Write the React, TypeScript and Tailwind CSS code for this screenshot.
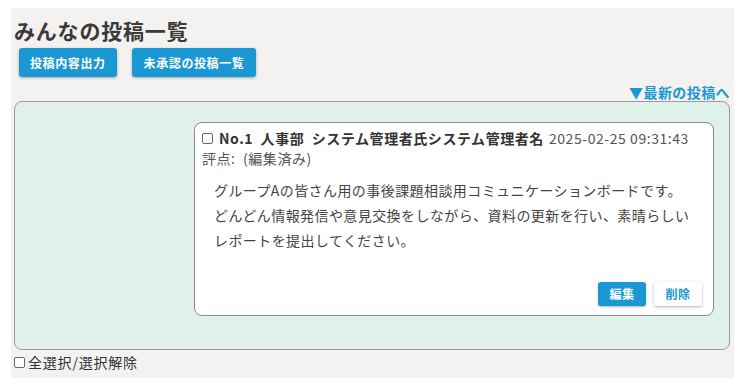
import React from "react";

function Box() {
  return <span className="inline-block w-[11px] h-[11px] border border-[#666] rounded-[2px] bg-white mr-[6px] align-[-1px]" />;
}

export default function App() {
  return (
    <div className="w-[740px] h-[386px] bg-white pt-[8px] pl-[11px] tracking-[0.05em]" style={{ fontFamily: '"Noto Sans CJK JP", "Noto Sans", sans-serif' }}>
      <div className="w-[723px] h-[370px] bg-[#f3f2f1] pl-[3px] pr-[4px] flex flex-col">
        <h1 className="text-[21px] font-bold text-[#3a3a3a] leading-[26px] mt-[9px]">みんなの投稿一覧</h1>
        <div className="flex gap-[15px] mt-[5px] ml-[5px]">
          <button className="h-[29px] px-[11px] bg-[#1b98d4] text-white text-[12px] font-bold rounded-[3px] shadow-[0_1px_3px_rgba(0,0,0,0.3)] tracking-[0.05em]">投稿内容出力</button>
          <button className="h-[29px] px-[12px] bg-[#1b98d4] text-white text-[12px] font-bold rounded-[3px] shadow-[0_1px_3px_rgba(0,0,0,0.3)] tracking-[0.05em]">未承認の投稿一覧</button>
        </div>
        <div className="flex justify-end mt-[6px] h-[18px] items-center">
          <span className="text-[14px] font-bold text-[#1b98d4] leading-[18px] tracking-[0.03em]">▼最新の投稿へ</span>
        </div>
        <div className="w-[716px] h-[249px] bg-[#e0f1ec] border border-[#9a9a9a] rounded-[8px] pt-[20px] pl-[179px] pr-[15px]">
          <div className="h-[194px] bg-white border border-[#8a8a8a] rounded-[8px] pt-[5px] px-[7px] flex flex-col text-[14px] tracking-[0.04em]">
            <div className="flex items-center leading-[20px] text-[#333] whitespace-nowrap">
              <Box />
              <span className="font-bold">No.1&nbsp;&nbsp;人事部&nbsp;&nbsp;システム管理者氏システム管理者名</span>
              <span className="ml-[5px] text-[#555]">2025-02-25 09:31:43</span>
            </div>
            <div className="leading-[20px] text-[#555] text-[14px]">評点:&nbsp;&nbsp;(編集済み)</div>
            <div className="mt-[10px] pl-[12px] leading-[25px] text-[#444] text-[14px] whitespace-nowrap tracking-[0.03em]">
              <div>グループAの皆さん用の事後課題相談用コミュニケーションボードです。</div>
              <div>どんどん情報発信や意見交換をしながら、資料の更新を行い、素晴らしい</div>
              <div>レポートを提出してください。</div>
            </div>
            <div className="mt-auto mb-[9px] flex justify-end gap-[8px] pr-[4px]">
              <button className="w-[48px] h-[24px] bg-[#1b98d4] text-white text-[12px] font-bold rounded-[3px] shadow-[0_1px_2px_rgba(0,0,0,0.3)]">編集</button>
              <button className="w-[48px] h-[24px] bg-white text-[#1b98d4] text-[12px] font-bold rounded-[3px] shadow-[0_1px_3px_rgba(0,0,0,0.3)]">削除</button>
            </div>
          </div>
        </div>
        <div className="flex items-center mt-[2px] leading-[20px] text-[14px] text-[#333]">
          <span className="inline-block w-[11px] h-[11px] border border-[#666] rounded-[2px] bg-white mr-[3px]" />
          全選択/選択解除
        </div>
      </div>
    </div>
  );
}
